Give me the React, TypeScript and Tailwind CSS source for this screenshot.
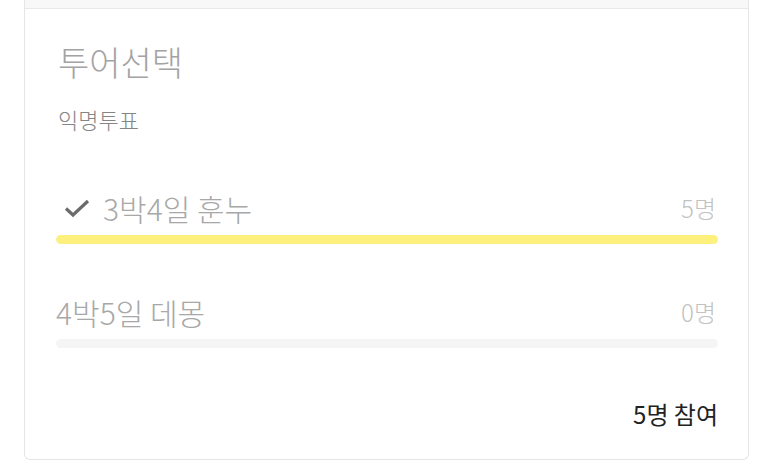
import React from "react";

const font = { fontFamily: '"Noto Sans CJK KR", "Noto Sans", sans-serif' };

function Option({ label, count, pct, checked }: { label: string; count: string; pct: number; checked?: boolean }) {
  return (
    <div className="flex flex-col">
      <div className="flex items-center justify-between h-[40px]">
        <div className="flex items-center">
          {checked && (
            <svg width="26" height="20" viewBox="0 0 26 20" className="ml-[8px] mr-[13px]">
              <path d="M2 10.5 L9 17 L24 3" fill="none" stroke="#6b6b6b" strokeWidth="3.2" />
            </svg>
          )}
          <span className="text-[30px] leading-[40px] font-light text-[#a8a8a8]">{label}</span>
        </div>
        <span className="text-[24px] leading-[40px] font-light text-[#c2c2c2] mr-[2px]">{count}</span>
      </div>
      <div className="mt-[7px] h-[9px] rounded-full bg-[#f5f5f5] overflow-hidden">
        <div className="h-full rounded-full bg-[#fdf07c]" style={{ width: `${pct}%` }} />
      </div>
    </div>
  );
}

export default function App() {
  return (
    <div className="w-[773px] h-[469px] bg-white overflow-hidden" style={font}>
      <div className="mx-[24px] border-x border-b border-[#e6e6e6] rounded-b-[6px]">
        <div className="h-[9px] bg-[#f8f8f8] border-b border-[#e8e8e8]" />
        <div className="pl-[31px] pr-[30px] pt-[31px] pb-[30px]">
          <div className="pl-[2px] text-[34px] leading-[44px] font-light text-[#a3a3a3]">투어선택</div>
          <div className="pl-[2px] mt-[20px] text-[22px] leading-[30px] font-light text-[#858585]">익명투표</div>
          <div className="mt-[54px]">
            <Option label="3박4일 훈누" count="5명" pct={100} checked />
          </div>
          <div className="mt-[48px]">
            <Option label="4박5일 데몽" count="0명" pct={0} />
          </div>
          <div className="mt-[51px] text-right text-[24px] leading-[30px] text-[#222]">5명 참여</div>
        </div>
      </div>
    </div>
  );
}
